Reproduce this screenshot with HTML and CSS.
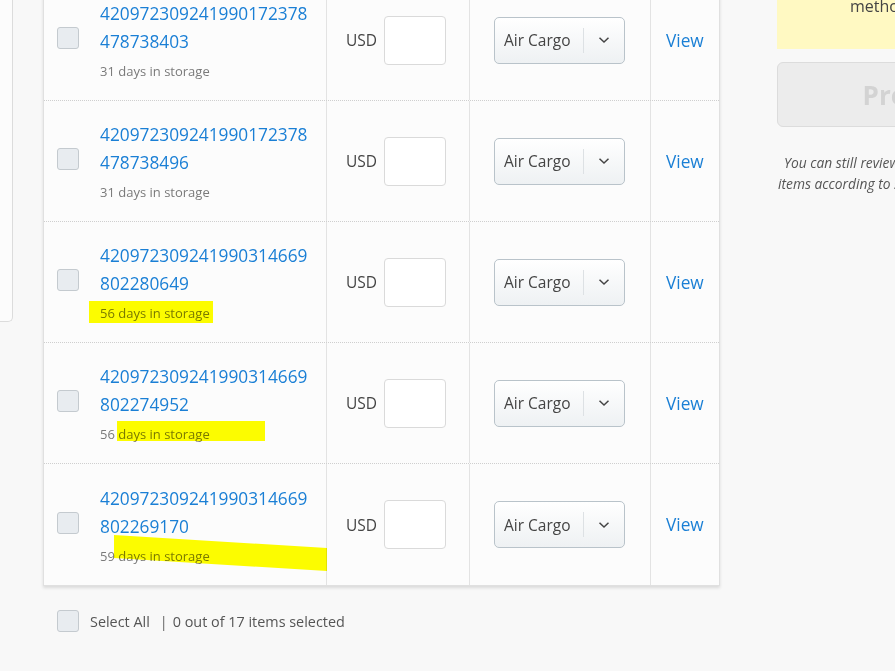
FILE: index.html
```html
<!DOCTYPE html>
<html>
<head>
<meta charset="utf-8">
<link rel="stylesheet" href="styles.css">
</head>
<body>
<div class="page">
  <aside class="side-panel"></aside>

  <main class="main">
    <div class="card">
      <div class="row">
        <div class="cell c-item">
          <span class="cb"></span>
          <div class="item-info">
            <a class="track">420972309241990172378<br>478738403</a>
            <div class="days">31 days in storage</div>
          </div>
        </div>
        <div class="cell c-value"><span class="cur">USD</span><span class="inp"></span></div>
        <div class="cell c-ship"><div class="sel"><span class="sel-text">Air Cargo</span><span class="sel-sep"></span><svg class="chev" width="12" height="8" viewBox="0 0 12 8"><path d="M1.5 1.8 L6 6 L10.5 1.8" fill="none" stroke="#444" stroke-width="1.5"/></svg></div></div>
        <div class="cell c-view"><a class="view">View</a></div>
      </div>
      <div class="row">
        <div class="cell c-item">
          <span class="cb"></span>
          <div class="item-info">
            <a class="track">420972309241990172378<br>478738496</a>
            <div class="days">31 days in storage</div>
          </div>
        </div>
        <div class="cell c-value"><span class="cur">USD</span><span class="inp"></span></div>
        <div class="cell c-ship"><div class="sel"><span class="sel-text">Air Cargo</span><span class="sel-sep"></span><svg class="chev" width="12" height="8" viewBox="0 0 12 8"><path d="M1.5 1.8 L6 6 L10.5 1.8" fill="none" stroke="#444" stroke-width="1.5"/></svg></div></div>
        <div class="cell c-view"><a class="view">View</a></div>
      </div>
      <div class="row">
        <div class="cell c-item">
          <span class="cb"></span>
          <div class="item-info">
            <a class="track">420972309241990314669<br>802280649</a>
            <div class="days">56 days in storage</div>
          </div>
        </div>
        <div class="cell c-value"><span class="cur">USD</span><span class="inp"></span></div>
        <div class="cell c-ship"><div class="sel"><span class="sel-text">Air Cargo</span><span class="sel-sep"></span><svg class="chev" width="12" height="8" viewBox="0 0 12 8"><path d="M1.5 1.8 L6 6 L10.5 1.8" fill="none" stroke="#444" stroke-width="1.5"/></svg></div></div>
        <div class="cell c-view"><a class="view">View</a></div>
      </div>
      <div class="row">
        <div class="cell c-item">
          <span class="cb"></span>
          <div class="item-info">
            <a class="track">420972309241990314669<br>802274952</a>
            <div class="days">56 days in storage</div>
          </div>
        </div>
        <div class="cell c-value"><span class="cur">USD</span><span class="inp"></span></div>
        <div class="cell c-ship"><div class="sel"><span class="sel-text">Air Cargo</span><span class="sel-sep"></span><svg class="chev" width="12" height="8" viewBox="0 0 12 8"><path d="M1.5 1.8 L6 6 L10.5 1.8" fill="none" stroke="#444" stroke-width="1.5"/></svg></div></div>
        <div class="cell c-view"><a class="view">View</a></div>
      </div>
      <div class="row last">
        <div class="cell c-item">
          <span class="cb"></span>
          <div class="item-info">
            <a class="track">420972309241990314669<br>802269170</a>
            <div class="days">59 days in storage</div>
          </div>
        </div>
        <div class="cell c-value"><span class="cur">USD</span><span class="inp"></span></div>
        <div class="cell c-ship"><div class="sel"><span class="sel-text">Air Cargo</span><span class="sel-sep"></span><svg class="chev" width="12" height="8" viewBox="0 0 12 8"><path d="M1.5 1.8 L6 6 L10.5 1.8" fill="none" stroke="#444" stroke-width="1.5"/></svg></div></div>
        <div class="cell c-view"><a class="view">View</a></div>
      </div>
    </div>

    <div class="footer">
      <span class="cb"></span>
      <span class="sel-all">Select All</span>
      <span class="pipe">|</span>
      <span class="count">0 out of 17 items selected</span>
    </div>
  </main>

  <aside class="summary">
    <div class="notice"><span class="notice-line">method.</span></div>
    <button class="proceed">Proceed</button>
    <p class="hint"><span class="hint-first">You can still review your selected</span><br>items according to shipping rules.</p>
  </aside>
</div>

<div class="hl hl-1"></div>
<div class="hl hl-2"></div>
<svg class="hl-svg" width="895" height="671" viewBox="0 0 895 671"><polygon points="114,535 327,548 327,571 114,558" fill="#ffff00"/></svg>
</body>
</html>
```

FILE: styles.css
```css
html, body {
  margin: 0;
  padding: 0;
}
body {
  background: #f8f8f8;
  font-family: "Open Sans", "Liberation Sans", sans-serif;
  color: #444;
  width: 895px;
  height: 671px;
  overflow: hidden;
  position: relative;
}
.page {
  display: flex;
  align-items: flex-start;
  margin-top: -20px;
}
.side-panel {
  width: 12px;
  height: 341px;
  background: #fcfcfc;
  border-right: 1px solid #dcdcdc;
  border-bottom: 1px solid #dcdcdc;
  border-bottom-right-radius: 5px;
  flex: none;
}
.main {
  margin-left: 30px;
  width: 677px;
  flex: none;
}
.card {
  background: #fcfcfc;
  border: 1px solid #e0e0e0;
  border-top: none;
  box-shadow: 0 2px 3px rgba(0,0,0,0.12);
}
.row {
  display: flex;
  height: 120px;
  border-bottom: 1px dotted #cfcfcf;
}
.row.last {
  border-bottom: none;
  height: 121px;
}
.cell {
  display: flex;
  align-items: center;
  box-sizing: border-box;
  border-right: 1px solid #e3e3e3;
}
.c-item {
  width: 283px;
  padding-left: 13px;
}
.c-value {
  width: 143px;
  padding-left: 19px;
}
.c-ship {
  width: 181px;
  padding-left: 24px;
}
.c-view {
  flex: 1;
  border-right: none;
  padding-left: 15px;
}
.cb {
  display: inline-block;
  width: 20px;
  height: 20px;
  background: #e8ecf0;
  border: 1px solid #c4cacf;
  border-radius: 3px;
  flex: none;
}
.c-item .cb {
  margin-bottom: 4px;
}
.item-info {
  margin-left: 21px;
}
.track {
  display: block;
  color: #1a7fd5;
  font-size: 17.3px;
  line-height: 28px;
  text-decoration: none;
}
.days {
  font-size: 13px;
  color: #7a7a7a;
  line-height: 18px;
  margin-top: 6px;
}
.cur {
  font-size: 15.5px;
  color: #444;
}
.inp {
  display: inline-block;
  width: 60px;
  height: 47px;
  background: #fff;
  border: 1px solid #dadada;
  border-radius: 4px;
  margin-left: 7px;
}
.sel {
  display: flex;
  align-items: center;
  width: 129px;
  height: 45px;
  border: 1px solid #b9c3ca;
  border-radius: 5px;
  background: linear-gradient(#ffffff, #eef1f3);
  box-sizing: content-box;
}
.sel-text {
  font-size: 15.5px;
  color: #444;
  padding-left: 9px;
  width: 79px;
}
.sel-sep {
  width: 1px;
  height: 25px;
  background: #dde1e4;
}
.chev {
  margin-left: 14px;
}
.view {
  color: #1a7fd5;
  font-size: 17.3px;
  text-decoration: none;
}
.footer {
  display: flex;
  align-items: center;
  margin-top: 24px;
  padding-left: 14px;
  font-size: 14.4px;
  color: #555;
}
.footer .cb {
  margin-right: 11px;
}
.pipe {
  margin: 0 5px 0 10px;
  color: #666;
}
.summary {
  margin-left: 57px;
  width: 276px;
  flex: none;
}
.notice {
  background: #fff9c2;
  height: 69px;
  box-sizing: border-box;
  padding: 15px 0 0 73px;
  font-size: 16px;
  line-height: 22px;
  color: #444;
}
.proceed {
  display: block;
  margin-top: 13px;
  width: 100%;
  height: 65px;
  background: #ececec;
  border: 1px solid #dcdcdc;
  border-radius: 6px;
  font-family: "Open Sans", "Liberation Sans", sans-serif;
  font-weight: 700;
  font-size: 26px;
  color: #d3d3d3;
}
.hint {
  margin: 25px 0 0;
  font-size: 13.8px;
  font-style: italic;
  color: #555;
  line-height: 21px;
  padding-left: 1px;
  white-space: nowrap;
}
.hint-first {
  padding-left: 6px;
}
.hl {
  position: absolute;
  background: #ffff00;
  mix-blend-mode: multiply;
}
.hl-1 {
  left: 89px;
  top: 301px;
  width: 124px;
  height: 22px;
}
.hl-2 {
  left: 117px;
  top: 421px;
  width: 148px;
  height: 20px;
}
.hl-svg {
  position: absolute;
  left: 0;
  top: 0;
  mix-blend-mode: multiply;
  pointer-events: none;
}
```
